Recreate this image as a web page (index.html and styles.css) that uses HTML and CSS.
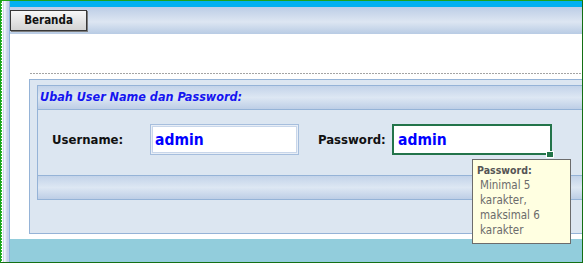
FILE: index.html
```html
<!DOCTYPE html>
<html>
<head>
<meta charset="utf-8">
<link rel="stylesheet" href="styles.css">
</head>
<body>
<div class="frame">
  <div class="rail"></div>
  <div class="main">
    <div class="topbar"></div>
    <div class="nav">
      <div class="btn">Beranda</div>
    </div>
    <div class="content">
      <div class="dots"></div>
      <div class="panel">
        <div class="group">
          <div class="group-head">Ubah User Name dan Password:</div>
          <div class="group-body">
            <div class="label label-user">Username:</div>
            <div class="field field-user">admin</div>
            <div class="label label-pass">Password:</div>
            <div class="field field-pass">admin<span class="handle"></span></div>
          </div>
          <div class="group-foot"></div>
        </div>
      </div>
    </div>
    <div class="footer"></div>
  </div>
  <div class="tip">
    <div class="tip-title">Password:</div>
    <div class="tip-text">Minimal 5<br>karakter,<br>maksimal 6<br>karakter</div>
  </div>
</div>
</body>
</html>
```
FILE: styles.css
```css
* { box-sizing: border-box; }
html, body { margin: 0; padding: 0; }
body {
  width: 583px;
  height: 263px;
  overflow: hidden;
  background: #ffffff;
  font-family: "DejaVu Sans Condensed", "DejaVu Sans", sans-serif;
  font-stretch: condensed;
}
.frame {
  position: relative;
  width: 583px;
  height: 263px;
  display: flex;
  border-top: 1px solid #1ba31b;
  border-left: 1px solid #1ba31b;
  border-right: 1px solid #146f14;
  border-bottom: 1px solid #146f14;
  overflow: hidden;
}
.rail {
  position: relative;
  flex: none;
  width: 9px;
  background: linear-gradient(to right,
    #ffffff 0 2px,
    #cbd8ec 2px 3px,
    #f1f5fa 3px 4px,
    #e4ebf5 4px 5px,
    #d2dcee 5px 6px,
    #c6d2ea 6px 8px,
    #8fb2de 8px 9px);
}
.rail::before {
  content: "";
  position: absolute;
  left: 0;
  top: 0;
  bottom: 0;
  width: 1px;
  background: repeating-linear-gradient(to bottom, #2cb52c 0 2px, #ffffff 2px 3px);
}
.main {
  flex: 1;
  min-width: 0;
  display: flex;
  flex-direction: column;
  overflow: hidden;
}
.topbar {
  flex: none;
  height: 6px;
  background: #00b0f0;
}
.nav {
  flex: none;
  height: 27px;
  padding-top: 3px;
  background: linear-gradient(to bottom, #bccde6 0%, #dde6f2 55%, #b8cbe4 100%);
}
.btn {
  width: 77px;
  height: 21px;
  border: 1px solid #383838;
  box-shadow: 1px 1px 0 #7d7d7d;
  background: linear-gradient(to bottom, #f7f7f7, #d3d3d3);
  font-size: 11.5px;
  font-weight: bold;
  line-height: 19px;
  text-align: center;
  color: #111111;
}
.content {
  flex: 1;
  background: #ffffff;
  padding-top: 39px;
}
.dots {
  height: 1px;
  margin-left: 20px;
  background: repeating-linear-gradient(to right, #a4a4a4 0 2px, transparent 2px 3px);
}
.panel {
  width: 600px;
  height: 155px;
  margin-top: 5px;
  margin-left: 19px;
  border: 1px solid #95b3d7;
  background: #dce6f1;
  padding: 5px 0 0 7px;
}
.group {
  height: 115px;
  border: 1px solid #95b3d7;
  background: #dce6f1;
}
.group-head {
  height: 24px;
  border-bottom: 1px solid #95b3d7;
  background: linear-gradient(to bottom, #c3d3e9 0%, #dde7f3 50%, #bdcee6 100%);
  padding-left: 2px;
  font-size: 12.5px;
  font-style: italic;
  font-weight: bold;
  line-height: 22px;
  color: #1515f0;
}
.group-body {
  height: 65px;
  display: flex;
  align-items: flex-start;
  padding: 14px 0 0 14px;
}
.label {
  height: 31px;
  display: flex;
  align-items: center;
  font-size: 13px;
  font-weight: bold;
  color: #111111;
}
.label-user { width: 98px; }
.label-pass { width: 74px; margin-left: 19px; }
.field {
  position: relative;
  height: 31px;
  background: #ffffff;
  font-size: 15.5px;
  font-weight: bold;
  color: #0000ff;
  display: flex;
  align-items: center;
}
.field-user {
  width: 149px;
  border: 1px solid #a6bedd;
  box-shadow: inset 0 0 0 1px #e8eef6, inset 0 0 0 2px #c8d6ea;
  padding-left: 4px;
}
.field-pass {
  width: 160px;
  border: 2px solid #23744a;
  padding-left: 4px;
}
.handle {
  position: absolute;
  right: -3px;
  bottom: -4px;
  width: 6px;
  height: 5px;
  background: #23744a;
  box-shadow: 0 0 0 1px #ffffff;
}
.group-foot {
  height: 24px;
  border-top: 1px solid #95b3d7;
  background: linear-gradient(to bottom, #c3d3e9 0%, #dde7f3 50%, #bdcee6 100%);
}
.footer {
  flex: none;
  height: 23px;
  background: #92cddc;
}
.tip {
  position: absolute;
  left: 471px;
  top: 158px;
  width: 99px;
  height: 85px;
  background: #ffffe1;
  border: 1px solid #6c6c6c;
  padding: 3px 0 0 4px;
  font-size: 11px;
  line-height: 15px;
}
.tip-title {
  font-weight: bold;
  color: #555555;
  font-size: 10.5px;
}
.tip-text {
  color: #6b6b6b;
  font-size: 11.5px;
  padding-left: 3px;
}
```
